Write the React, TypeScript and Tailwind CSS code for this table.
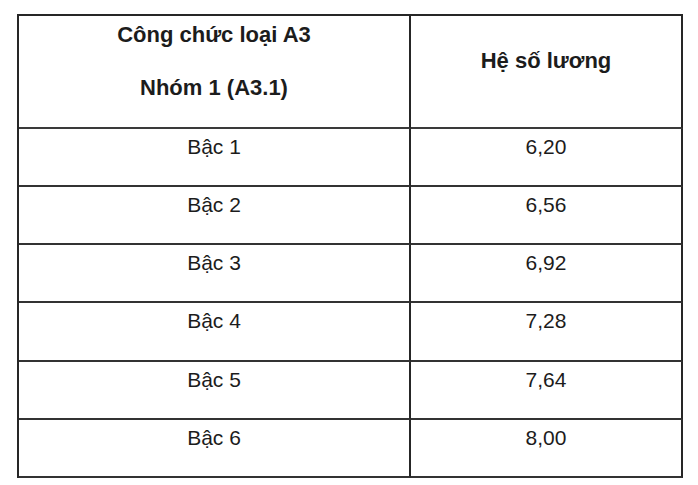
const rows = [
  { name: 'Bậc 1', value: '6,20', h: 'h-[56px]' },
  { name: 'Bậc 2', value: '6,56', h: 'h-[56px]' },
  { name: 'Bậc 3', value: '6,92', h: 'h-[56px]' },
  { name: 'Bậc 4', value: '7,28', h: 'h-[57px]' },
  { name: 'Bậc 5', value: '7,64', h: 'h-[56px]' },
  { name: 'Bậc 6', value: '8,00', h: 'h-[56px]' },
];

const App = () => {
  return (
    <div className="min-h-[485px] bg-white pl-[17px] pt-[14px] font-['Liberation_Sans',Arial,sans-serif] text-[#1c1c1c]">
      <table className="w-[666px] table-fixed border-separate border-spacing-0 border-l-2 border-t-2 border-[#262626]">
        <colgroup>
          <col className="w-[392px]" />
          <col className="w-[272px]" />
        </colgroup>
        <thead>
          <tr>
            <th className="border-b-2 border-r-2 border-[#3a3a3a] border-r-[#262626] p-0 align-top">
              <div className="h-[111px] pt-[7px] text-center text-[22px] font-bold leading-[24px]">
                <p className="mb-[29px]">Công chức loại A3</p>
                <p>Nhóm 1 (A3.1)</p>
              </div>
            </th>
            <th className="border-b-2 border-r-2 border-[#3a3a3a] border-r-[#262626] p-0 align-top">
              <div className="h-[111px] pt-[33px] text-center text-[22px] font-bold leading-[24px]">
                <p>Hệ số lương</p>
              </div>
            </th>
          </tr>
        </thead>
        <tbody>
          {rows.map((r) => (
            <tr key={r.name}>
              <td className="border-b-2 border-r-2 border-[#333] border-r-[#262626] p-0 align-top">
                <div className={`${r.h} pt-[6px] text-center text-[21px] leading-[24px]`}>{r.name}</div>
              </td>
              <td className="border-b-2 border-r-2 border-[#333] border-r-[#262626] p-0 align-top">
                <div className={`${r.h} pt-[6px] text-center text-[21px] leading-[24px]`}>{r.value}</div>
              </td>
            </tr>
          ))}
        </tbody>
      </table>
    </div>
  );
};

export default App;
